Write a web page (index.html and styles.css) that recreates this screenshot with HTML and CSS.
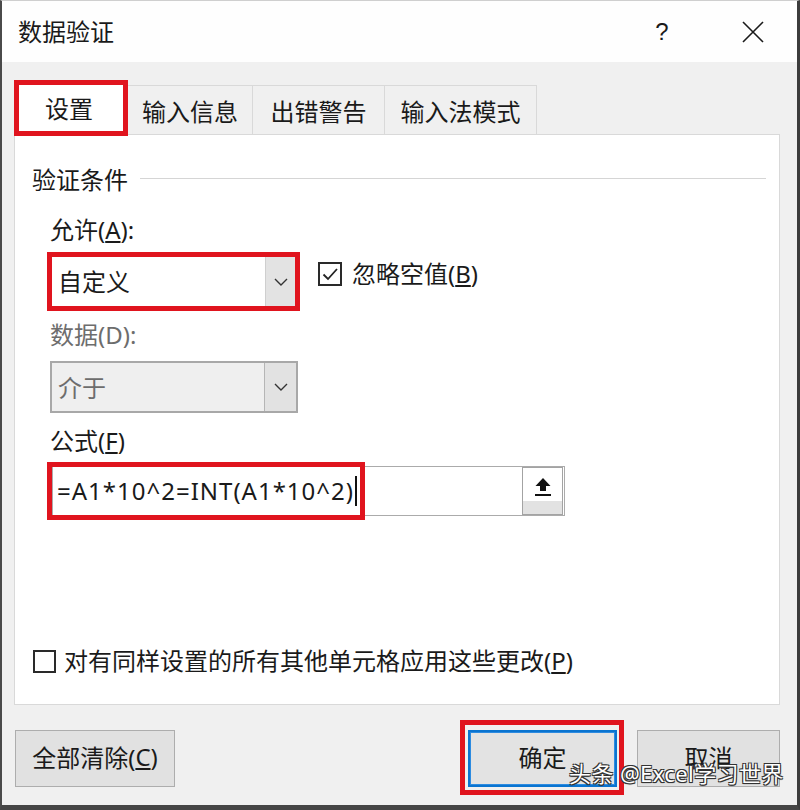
FILE: index.html
```html
<!DOCTYPE html>
<html lang="zh-CN">
<head>
<meta charset="utf-8">
<title>数据验证</title>
<link rel="stylesheet" href="styles.css">
</head>
<body>
<div class="window">
  <header class="titlebar">
    <span class="title">数据验证</span>
    <span class="help">?</span>
    <span class="close">
      <svg width="22" height="22" viewBox="0 0 22 22"><path d="M1 1L21 21M21 1L1 21" stroke="#1a1a1a" stroke-width="1.6" fill="none"/></svg>
    </span>
  </header>
  <div class="body">
    <div class="tabs">
      <div class="tab tab-active">设置</div>
      <div class="tab tab-w1">输入信息</div>
      <div class="tab tab-w2">出错警告</div>
      <div class="tab tab-w3">输入法模式</div>
    </div>
    <div class="panel">
      <div class="group-title"><span>验证条件</span><i class="rule"></i></div>
      <div class="fields">
        <div class="label">允许(<u>A</u>):</div>
        <div class="row">
          <div class="hl-box">
            <div class="combo">
              <span class="combo-text">自定义</span>
              <span class="combo-btn"><svg width="14" height="8" viewBox="0 0 14 8"><path d="M1 1L7 7L13 1" stroke="#333" stroke-width="1.4" fill="none"/></svg></span>
            </div>
          </div>
          <div class="check check-top">
            <span class="box"><svg width="20" height="20" viewBox="0 0 20 20"><path d="M3.5 10.5L8 15L17 5" stroke="#222" stroke-width="1.8" fill="none"/></svg></span>
            <span class="check-text">忽略空值(<u>B</u>)</span>
          </div>
        </div>
        <div class="label label-disabled">数据(D):</div>
        <div class="combo combo-disabled">
          <span class="combo-text">介于</span>
          <span class="combo-btn"><svg width="14" height="8" viewBox="0 0 14 8"><path d="M1 1L7 7L13 1" stroke="#333" stroke-width="1.4" fill="none"/></svg></span>
        </div>
        <div class="label label-formula">公式(<u>F</u>)</div>
        <div class="formula">
          <span class="formula-text">=A1*10^2=INT(A1*10^2)</span><span class="caret"></span>
          <span class="ref-btn"><svg width="20" height="22" viewBox="0 0 20 22"><path d="M10 2L2.5 10H7V15H13V10H17.5Z" fill="#111"/><rect x="2" y="18" width="16" height="2" fill="#111"/></svg></span>
          <span class="hl-overlay"></span>
        </div>
      </div>
      <div class="check check-bottom">
        <span class="box box-empty"></span>
        <span class="check-text">对有同样设置的所有其他单元格应用这些更改(<u>P</u>)</span>
      </div>
    </div>
    <div class="footer">
      <button class="btn btn-clear">全部清除(<u>C</u>)</button>
      <div class="hl-ok"><button class="btn btn-ok">确定</button></div>
      <button class="btn btn-cancel">取消</button>
    </div>
  </div>
  <div class="watermark">头条 @Excel学习世界</div>
</div>
</body>
</html>
```

FILE: styles.css
```css
* { box-sizing: border-box; }
html, body { margin: 0; padding: 0; background: #f0f0f0; }
body {
  font-family: "Noto Sans", "Noto Sans CJK SC", sans-serif;
  color: #1a1a1a;
}
.window {
  position: relative;
  width: 800px;
  height: 810px;
  background: #f0f0f0;
  border-top: 1px solid #cfcfcf;
  border-left: 2px solid #4a4a4a;
  border-right: 3px solid #3c3c3c;
  border-bottom: 5px solid #454545;
  display: flex;
  flex-direction: column;
}
.titlebar {
  height: 61px;
  background: #fefefe;
  display: flex;
  align-items: center;
  padding-left: 16px;
  flex: none;
}
.title { font-size: 24px; line-height: 30px; }
.help {
  margin-left: auto;
  font-size: 24px;
  width: 20px;
  text-align: center;
  margin-right: 70px;
  font-family: "Liberation Sans", sans-serif;
  font-weight: 300;
}
.close { width: 22px; height: 22px; margin-right: 33px; display: flex; }
.body {
  flex: 1;
  padding: 18px 17px 0 12px;
  display: flex;
  flex-direction: column;
}
.tabs {
  display: flex;
  align-items: flex-end;
  height: 54px;
  flex: none;
}
.tab {
  flex: none;
  height: 49px;
  border: 1px solid #d9d9d9;
  border-bottom: 0;
  border-left: 0;
  background: #f0f0f0;
  font-size: 24px;
  display: flex;
  align-items: center;
  justify-content: center;
}
.tab-active {
  width: 114px;
  height: 56px;
  margin-bottom: -2px;
  border: 5px solid #e0141e;
  background: #fff;
  position: relative;
  z-index: 1;
  padding-right: 4px;
  padding-bottom: 2px;
}
.tab-w1 { width: 125px; }
.tab-w2 { width: 132px; }
.tab-w3 { width: 152px; }
.panel {
  height: 571px;
  background: #fff;
  border: 1px solid #d9d9d9;
  display: flex;
  flex-direction: column;
  flex: none;
}
.group-title {
  margin-top: 29px;
  margin-left: 17px;
  margin-right: 13px;
  height: 28px;
  display: flex;
  align-items: center;
  font-size: 24px;
}
.rule { flex: 1; height: 1px; background: #d5d5d5; margin-left: 12px; }
.fields {
  margin-left: 32px;
  display: flex;
  flex-direction: column;
  align-items: flex-start;
}
.label {
  font-size: 24px;
  line-height: 28px;
  height: 28px;
  padding-left: 3px;
  margin-top: 24px;
}
.label-disabled { color: #6d6d6d; margin-top: 10px; }
.label-formula { margin-top: 14px; }
.row {
  margin-top: 8px;
  display: flex;
  align-items: flex-start;
}
.hl-box {
  width: 253px;
  height: 59px;
  border: 5px solid #e0141e;
}
.combo {
  width: 100%;
  height: 100%;
  background: #fff;
  display: flex;
  align-items: stretch;
}
.combo-text {
  flex: 1;
  font-size: 24px;
  display: flex;
  align-items: center;
  padding-left: 6px;
  padding-bottom: 2px;
}
.combo-btn {
  width: 30px;
  background: #e3e3e3;
  border-left: 1px solid #cfcfcf;
  display: flex;
  align-items: center;
  justify-content: center;
}
.combo-disabled {
  margin-top: 12px;
  margin-left: 3px;
  width: 248px;
  height: 52px;
  border: 2px solid #a8a8a8;
  background: #efefef;
}
.combo-disabled .combo-text { color: #6d6d6d; padding-left: 6px; }
.combo-disabled .combo-btn { width: 32px; border-left: 1px solid #b5b5b5; background: #e2e2e2; }
.check {
  display: flex;
  align-items: center;
  margin-left: 18px;
}
.check-top { margin-top: 8px; }
.box {
  width: 24px;
  height: 24px;
  border: 2px solid #2a2a2a;
  background: #fff;
  display: flex;
  align-items: center;
  justify-content: center;
}
.check-text { font-size: 24px; margin-left: 10px; line-height: 28px; }
.formula {
  position: relative;
  margin-top: 11px;
  margin-left: 5px;
  width: 513px;
  height: 50px;
  border: 1px solid #ababab;
  background: #fff;
  display: flex;
  align-items: center;
}
.formula-text {
  font-size: 24px;
  padding-left: 4px;
  padding-bottom: 2px;
  letter-spacing: 1px;
}
.caret { width: 2px; height: 30px; background: #111; margin-left: 1px; }
.ref-btn {
  position: absolute;
  right: 1px;
  top: 0;
  width: 41px;
  height: 48px;
  border: 1px solid #a3a3a3;
  background: linear-gradient(#fff 0, #fff 72%, #e2e2e2 72%);
  display: flex;
  justify-content: center;
  padding-top: 8px;
}
.hl-overlay {
  position: absolute;
  left: -6px;
  top: -5px;
  width: 318px;
  height: 58px;
  border: 5px solid #e0141e;
}
.check-bottom {
  margin-top: auto;
  margin-bottom: 29px;
  margin-left: 18px;
}
.box-empty { width: 23px; height: 23px; }
.check-bottom .check-text { margin-left: 8px; }
.footer {
  flex: 1;
  display: flex;
  align-items: flex-start;
  padding-top: 25px;
}
.btn {
  font-family: inherit;
  font-size: 24px;
  color: #1a1a1a;
  height: 57px;
  background: #e1e1e1;
  border: 1px solid #adadad;
  padding: 0 0 4px;
  display: flex;
  align-items: center;
  justify-content: center;
}
.btn-clear { width: 160px; margin-left: 1px; }
.hl-ok {
  margin-left: auto;
  margin-top: -10px;
  border: 5px solid #e0141e;
  padding: 5px 2px 3px 3px;
}
.btn-ok {
  width: 149px;
  border: 2px solid #0a74d0;
  box-shadow: inset 0 0 0 1px #2d8be0;
  background: #e3e3e3;
}
.btn-cancel { width: 143px; margin-left: 13px; }
.watermark {
  position: absolute;
  left: 567px;
  top: 757px;
  font-size: 22px;
  line-height: 30px;
  color: #fff;
  text-shadow: 1px 1px 0 #333, -1px -1px 0 #333, 1px -1px 0 #333, -1px 1px 0 #333, 0 1px 1px #222;
  letter-spacing: 0.4px;
}
```
